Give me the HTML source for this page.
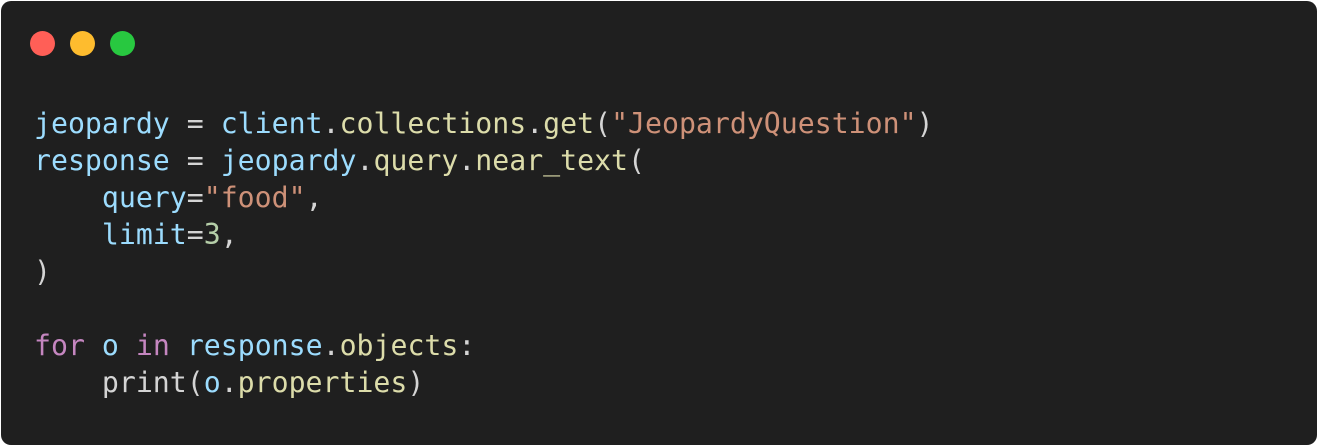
<!DOCTYPE html>
<html><head><style>
html,body{margin:0;padding:0;background:#fff;width:1318px;height:446px;overflow:hidden}
.win{position:absolute;left:1px;top:1px;width:1316px;height:444px;background:#1f1f1f;border-radius:10px}
.d{position:absolute;top:30px;width:25px;height:25px;border-radius:50%}
pre{position:absolute;left:33px;top:104px;margin:0;font-family:"DejaVu Sans Mono","Liberation Mono",monospace;font-size:28.2px;line-height:37px;color:#d4d4d4}
.v{color:#9cdcfe}.f{color:#dcdcaa}.s{color:#ce9178}.k{color:#c586c0}.n{color:#b5cea8}
</style></head><body>
<div class="win">
<div class="d" style="left:29px;background:#ff5f57"></div>
<div class="d" style="left:69px;background:#febc2e"></div>
<div class="d" style="left:109px;background:#28c840"></div>
<pre><span class="v">jeopardy</span> = <span class="v">client</span>.<span class="f">collections</span>.<span class="f">get</span>(<span class="s">"JeopardyQuestion"</span>)
<span class="v">response</span> = <span class="v">jeopardy</span>.<span class="f">query</span>.<span class="f">near_text</span>(
    <span class="v">query</span>=<span class="s">"food"</span>,
    <span class="v">limit</span>=<span class="n">3</span>,
)

<span class="k">for</span> <span class="v">o</span> <span class="k">in</span> <span class="v">response</span>.<span class="f">objects</span>:
    print(<span class="v">o</span>.<span class="f">properties</span>)</pre>
</div>
</body></html>
